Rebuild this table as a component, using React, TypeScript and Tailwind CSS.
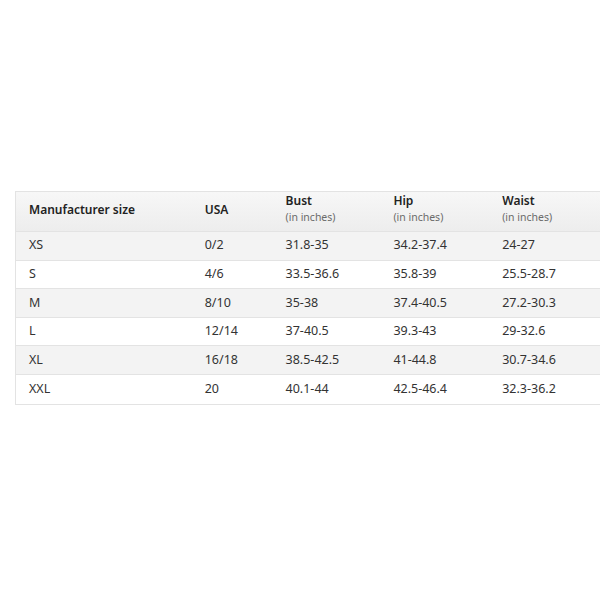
const rows = [
  ["XS", "0/2", "31.8-35", "34.2-37.4", "24-27"],
  ["S", "4/6", "33.5-36.6", "35.8-39", "25.5-28.7"],
  ["M", "8/10", "35-38", "37.4-40.5", "27.2-30.3"],
  ["L", "12/14", "37-40.5", "39.3-43", "29-32.6"],
  ["XL", "16/18", "38.5-42.5", "41-44.8", "30.7-34.6"],
  ["XXL", "20", "40.1-44", "42.5-46.4", "32.3-36.2"],
];

const widths = ["w-[176px]", "w-[81px]", "w-[108px]", "w-[109px]", "w-[111px]"];

export default function App() {
  return (
    <div className="w-[600px] h-[600px] bg-white pt-[191px] pl-[15px] font-['Noto_Sans','Open_Sans',sans-serif]">
      <div className="w-[585px] border border-r-0 border-[#e3e3e3]">
        <div className="flex h-[40px] bg-gradient-to-b from-[#f7f7f7] to-[#ededed] border-b border-[#e3e3e3] text-[12px] text-[#222]">
          <div className={`${widths[0]} pl-[13px] pb-[3px] flex items-center font-semibold`}>Manufacturer size</div>
          <div className={`${widths[1]} pl-[13px] pb-[3px] flex items-center font-semibold`}>USA</div>
          {["Bust", "Hip", "Waist"].map((h, i) => (
            <div key={h} className={`${widths[i + 2]} pl-[13px] flex flex-col`}>
              <span className="font-semibold leading-[17px]">{h}</span>
              <span className="text-[10.5px] text-[#6b6b6b] leading-[17px]">(in inches)</span>
            </div>
          ))}
        </div>
        {rows.map((r, i) => (
          <div
            key={r[0]}
            className={`flex h-[28.6px] items-center text-[12.5px] text-[#333] ${i % 2 === 0 ? "bg-[#f3f3f3]" : "bg-white"} ${i < rows.length - 1 ? "border-b border-[#e3e3e3]" : ""}`}
          >
            {r.map((c, j) => (
              <div key={j} className={`${widths[j]} pl-[13px]`}>{c}</div>
            ))}
          </div>
        ))}
      </div>
    </div>
  );
}
